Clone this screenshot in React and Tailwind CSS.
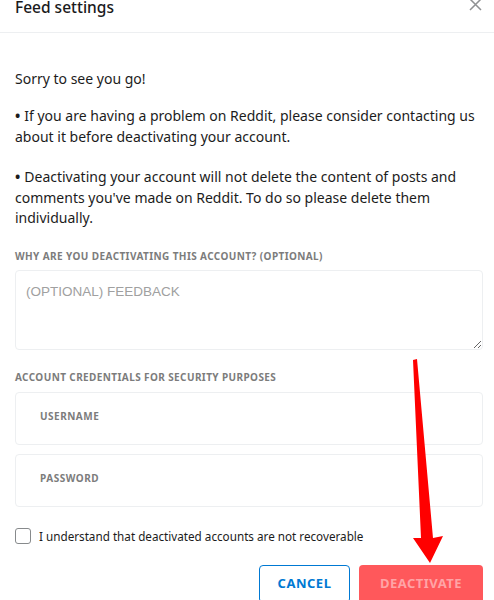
import React, { useState } from 'react';

const App = () => {
  const [agree, setAgree] = useState(false);

  return (
    <div className="relative w-[494px] h-[600px] overflow-hidden bg-white text-[#1c1c1c]" style={{ fontFamily: '"Noto Sans", sans-serif' }}>
      {/* Header */}
      <div className="flex justify-between h-[33px] border-b border-[#edeff1] pl-[15px] pr-[11px]">
        <h2 className="-mt-[3px] text-[15.5px] leading-[20px] font-medium text-[#1a1a1b]">Feed settings</h2>
        <button className="-mt-[3px] self-start text-[#8f9193]">
          <svg width="15" height="15" viewBox="0 0 15 15" fill="none" stroke="currentColor" strokeWidth="1.5">
            <path d="M2 2 L13 13 M13 2 L2 13" />
          </svg>
        </button>
      </div>

      {/* Body */}
      <div className="pl-[15px] pr-[11px] pt-[35px]">
        <p className="text-[14px] leading-[21px]">Sorry to see you go!</p>
        <p className="mt-[16px] text-[14px] leading-[21px]">
          <span className="mr-[4px] font-bold">•</span>If you are having a problem on Reddit, please consider contacting us about it before deactivating your account.
        </p>
        <p className="mt-[20px] text-[14px] leading-[20.5px]">
          <span className="mr-[4px] font-bold">•</span>Deactivating your account will not delete the content of posts and comments you've made on Reddit. To do so please delete them individually.
        </p>

        <p className="mt-[21px] text-[10px] leading-[12px] font-bold tracking-[0.4px] text-[#7c7c7c]">WHY ARE YOU DEACTIVATING THIS ACCOUNT? (OPTIONAL)</p>
        <textarea
          placeholder="(OPTIONAL) FEEDBACK"
          className="mt-[8px] block w-full h-[80px] rounded-[4px] border border-[#edeff1] px-[10px] py-[12px] text-[13.5px] leading-[18px] outline-none placeholder:text-[#a0a0a0]"
          style={{ fontFamily: '"Liberation Sans", Arial, sans-serif' }}
        />

        <p className="mt-[21px] text-[10px] leading-[12px] font-bold tracking-[0.4px] text-[#7c7c7c]">ACCOUNT CREDENTIALS FOR SECURITY PURPOSES</p>
        <div className="mt-[9px] flex flex-col gap-[9px]">
          <div className="flex items-center h-[53px] rounded-[4px] border border-[#edeff1] pl-[24px] pb-[4px]">
            <span className="text-[10px] leading-[12px] font-bold tracking-[0.5px] text-[#7c7c7c]">USERNAME</span>
          </div>
          <div className="flex items-center h-[53px] rounded-[4px] border border-[#edeff1] pl-[24px] pb-[4px]">
            <span className="text-[10px] leading-[12px] font-bold tracking-[0.5px] text-[#7c7c7c]">PASSWORD</span>
          </div>
        </div>

        <label className="mt-[21px] flex items-center gap-[8px] cursor-pointer">
          <input
            type="checkbox"
            checked={agree}
            onChange={(e) => setAgree(e.target.checked)}
            className="appearance-none w-[16px] h-[16px] rounded-[3px] border border-[#878a8c] bg-white"
          />
          <span className="text-[11.7px] leading-[16px] text-[#1c1c1c]">I understand that deactivated accounts are not recoverable</span>
        </label>

        <div className="mt-[21px] flex justify-end gap-[9px]">
          <button className="w-[91px] h-[38px] rounded-[4px] border border-[#0079d3] text-[13px] font-bold tracking-[0.5px] text-[#0079d3]">CANCEL</button>
          <button className="w-[124px] h-[38px] rounded-[4px] bg-[#ff585b] text-[13px] font-bold tracking-[0.5px] text-[#ffa4a6]">DEACTIVATE</button>
        </div>
      </div>

      {/* Red annotation arrow */}
      <svg className="absolute left-0 top-0 pointer-events-none" width="494" height="600" viewBox="0 0 494 600">
        <polygon points="413,360 417,359 433,538 443,536 430,563 413,538 421,538" fill="#ff0000" />
      </svg>
    </div>
  );
};

export default App;
